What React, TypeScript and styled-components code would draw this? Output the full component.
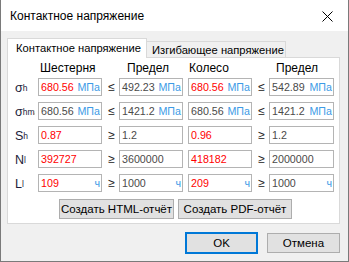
import React from "react";
import styled, { createGlobalStyle } from "styled-components";

const Global = createGlobalStyle`
  html, body { margin: 0; padding: 0; background: #ffffff; }
  body { font-family: "Liberation Sans", Arial, sans-serif; }
  * { box-sizing: border-box; }
`;

const Window = styled.div`
  width: 349px;
  height: 262px;
  border: 1px solid #7a7a7a;
  border-top: none;
  display: flex;
  flex-direction: column;
  background: #f0f0f0;
  overflow: hidden;
`;

const TitleBar = styled.div`
  height: 31px;
  flex: none;
  background: #ffffff;
  display: flex;
  align-items: center;
  justify-content: space-between;
  padding: 1px 15px 0 9px;
  font-size: 12px;
  color: #000;
`;

const Body = styled.div`
  flex: 1;
  display: flex;
  flex-direction: column;
  padding: 7px 8px 0 6px;
`;

const TabStrip = styled.div`
  display: flex;
  align-items: flex-end;
  height: 20px;
  position: relative;
  z-index: 1;
`;

const Tab = styled.div<{ $active?: boolean }>`
  width: 140px;
  height: ${(p) => (p.$active ? "20px" : "17px")};
  background: ${(p) => (p.$active ? "#ffffff" : "#f0f0f0")};
  border: 1px solid #d9d9d9;
  border-bottom: ${(p) => (p.$active ? "none" : "1px solid #d9d9d9")};
  margin-left: ${(p) => (p.$active ? "0" : "-1px")};
  font-size: 11.2px;
  color: #000;
  display: flex;
  align-items: center;
  padding-left: ${(p) => (p.$active ? "8px" : "5px")};
  padding-bottom: ${(p) => (p.$active ? "2px" : "0")};
  white-space: nowrap;
  overflow: hidden;
`;

const Panel = styled.div`
  margin-top: -1px;
  height: 167px;
  background: #ffffff;
  border: 1px solid #d9d9d9;
  padding: 3px 0 0 7px;
  display: flex;
  flex-direction: column;
`;

const Grid = styled.div`
  display: grid;
  grid-template-columns: 23px 64px 17px 64px 5px 64px 17px 65px;
  grid-template-rows: 11px repeat(5, 18px);
  row-gap: 6px;
`;

const HeaderRow = styled.div`
  display: contents;
`;

const Header = styled.div<{ $col: number; $pad: number }>`
  grid-column: ${(p) => p.$col};
  font-size: 12px;
  color: #000;
  padding-left: ${(p) => p.$pad}px;
  line-height: 14px;
  white-space: nowrap;
`;

const Label = styled.div`
  grid-column: 1;
  font-size: 12.5px;
  color: #1c1c3a;
  display: flex;
  align-items: center;
  overflow: hidden;
  white-space: nowrap;
  width: 20px;
  padding-top: 2px;
`;

const Sub = styled.sub`
  font-size: 8.5px;
  vertical-align: -3px;
  line-height: 0;
`;

const Field = styled.div`
  height: 18px;
  border: 1px solid #b4b4b4;
  display: flex;
  align-items: center;
  justify-content: space-between;
  padding: 0 1px 0 2px;
  font-size: 10.7px;
  white-space: nowrap;
  overflow: hidden;
`;

const Value = styled.span<{ $red?: boolean }>`
  color: ${(p) => (p.$red ? "#ff0000" : "#4a4a4a")};
`;

const Unit = styled.span`
  color: #3c9be6;
`;

const Sym = styled.div`
  font-size: 12px;
  color: #202020;
  display: flex;
  align-items: center;
  justify-content: center;
  padding-left: 2px;
`;

const ReportRow = styled.div`
  display: flex;
  gap: 4px;
  margin: 7px 0 0 44px;
`;

const Button = styled.button<{ $w: number; $default?: boolean }>`
  width: ${(p) => p.$w}px;
  height: ${(p) => (p.$default ? "22px" : "20px")};
  background: #e1e1e1;
  border: ${(p) => (p.$default ? "2px solid #0078d7" : "1px solid #adadad")};
  font-family: "Liberation Sans", Arial, sans-serif;
  font-size: 11.5px;
  color: #000;
  padding: 0;
  white-space: nowrap;
  display: flex;
  align-items: center;
  justify-content: center;
`;

const Footer = styled.div`
  display: flex;
  justify-content: flex-end;
  align-items: center;
  gap: 9px;
  margin-top: 8px;
`;

const Spacer = styled.div`
  grid-column: 5;
`;

type Cell = { v: string; red?: boolean; unit?: string };
type Row = { sym: string; sub: string; cells: [Cell, string, Cell, Cell, string, Cell] };

const rows: Row[] = [
  {
    sym: "σ",
    sub: "h",
    cells: [
      { v: "680.56", red: true, unit: "МПа" },
      "≤",
      { v: "492.23", unit: "МПа" },
      { v: "680.56", red: true, unit: "МПа" },
      "≤",
      { v: "542.89", unit: "МПа" },
    ],
  },
  {
    sym: "σ",
    sub: "hmax",
    cells: [
      { v: "680.56", unit: "МПа" },
      "≤",
      { v: "1421.2", unit: "МПа" },
      { v: "680.56", unit: "МПа" },
      "≤",
      { v: "1421.2", unit: "МПа" },
    ],
  },
  {
    sym: "S",
    sub: "h",
    cells: [{ v: "0.87", red: true }, "≥", { v: "1.2" }, { v: "0.96", red: true }, "≥", { v: "1.2" }],
  },
  {
    sym: "N",
    sub: "l",
    cells: [{ v: "392727", red: true }, "≥", { v: "3600000" }, { v: "418182", red: true }, "≥", { v: "2000000" }],
  },
  {
    sym: "L",
    sub: "l",
    cells: [
      { v: "109", red: true, unit: "ч" },
      "≥",
      { v: "1000", unit: "ч" },
      { v: "209", red: true, unit: "ч" },
      "≥",
      { v: "1000", unit: "ч" },
    ],
  },
];

const FieldBox = ({ c }: { c: Cell }) => (
  <Field>
    <Value $red={c.red}>{c.v}</Value>
    {c.unit ? <Unit>{c.unit}</Unit> : null}
  </Field>
);

const CloseIcon = () => (
  <svg width="11" height="11" viewBox="0 0 11 11">
    <path d="M0.5 0.5 L10.5 10.5 M10.5 0.5 L0.5 10.5" stroke="#000" strokeWidth="1" />
  </svg>
);

export default function App() {
  return (
    <>
      <Global />
      <Window>
        <TitleBar>
          <span>Контактное напряжение</span>
          <CloseIcon />
        </TitleBar>
        <Body>
          <TabStrip>
            <Tab $active>Контактное напряжение</Tab>
            <Tab>Изгибающее напряжение</Tab>
          </TabStrip>
          <Panel>
            <Grid>
              <HeaderRow>
                <Header $col={2} $pad={2}>Шестерня</Header>
                <Header $col={4} $pad={8}>Предел</Header>
                <Header $col={6} $pad={1}>Колесо</Header>
                <Header $col={8} $pad={7}>Предел</Header>
              </HeaderRow>
              {rows.map((r, i) => (
                <React.Fragment key={i}>
                  <Label>
                    {r.sym}
                    <Sub>{r.sub}</Sub>
                  </Label>
                  <FieldBox c={r.cells[0] as Cell} />
                  <Sym>{r.cells[1] as string}</Sym>
                  <FieldBox c={r.cells[2] as Cell} />
                  <Spacer />
                  <FieldBox c={r.cells[3] as Cell} />
                  <Sym>{r.cells[4] as string}</Sym>
                  <FieldBox c={r.cells[5] as Cell} />
                </React.Fragment>
              ))}
            </Grid>
            <ReportRow>
              <Button $w={115}>Создать HTML-отчёт</Button>
              <Button $w={114}>Создать PDF-отчёт</Button>
            </ReportRow>
          </Panel>
          <Footer>
            <Button $w={73} $default>OK</Button>
            <Button $w={73}>Отмена</Button>
          </Footer>
        </Body>
      </Window>
    </>
  );
}
